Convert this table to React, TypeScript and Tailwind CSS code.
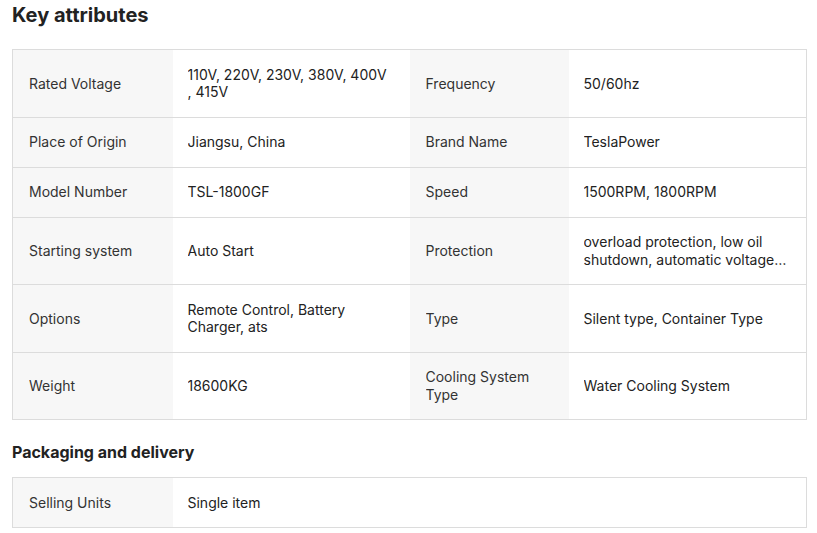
const attrs: [string, string, string, string][] = [
  ["Rated Voltage", "110V, 220V, 230V, 380V, 400V , 415V", "Frequency", "50/60hz"],
  ["Place of Origin", "Jiangsu, China", "Brand Name", "TeslaPower"],
  ["Model Number", "TSL-1800GF", "Speed", "1500RPM, 1800RPM"],
  ["Starting system", "Auto Start", "Protection", "overload protection, low oil shutdown, automatic voltage regulation"],
  ["Options", "Remote Control, Battery Charger, ats", "Type", "Silent type, Container Type"],
  ["Weight", "18600KG", "Cooling System Type", "Water Cooling System"],
];

function Label({ text }: { text: string }) {
  return (
    <td className="border-y border-[#dcdcdc] bg-[#f7f7f7] px-4 py-[15.75px] align-middle text-[#333]">
      <div className="line-clamp-2">{text}</div>
    </td>
  );
}

function Value({ text }: { text: string }) {
  return (
    <td className="border-y border-[#dcdcdc] bg-white py-[15.75px] pl-[15px] pr-4 align-middle text-[#222]">
      <div className="line-clamp-2">{text}</div>
    </td>
  );
}

export default function App() {
  return (
    <div
      className="min-h-[533px] w-[817px] bg-white pl-3 pr-[10px] text-[14px] leading-[17.5px]"
      style={{ fontFamily: "Inter, 'Liberation Sans', sans-serif" }}
    >
      <h2 className="pt-[1px] text-[20px] font-bold leading-[28px] text-[#222]">
        Key attributes
      </h2>

      <table className="mt-5 w-full table-fixed border-collapse border border-[#dcdcdc]">
        <colgroup>
          <col className="w-[160px]" />
          <col className="w-[237px]" />
          <col className="w-[159px]" />
          <col />
        </colgroup>
        <tbody>
          {attrs.map((row, index) => (
            <tr key={index}>
              <Label text={row[0]} />
              <Value text={row[1]} />
              <Label text={row[2]} />
              <Value text={row[3]} />
            </tr>
          ))}
        </tbody>
      </table>

      <h3 className="mt-[21px] text-[16px] font-bold leading-[22px] text-[#222]">
        Packaging and delivery
      </h3>

      <table className="mt-[14px] w-full table-fixed border-collapse border border-[#dcdcdc]">
        <colgroup>
          <col className="w-[160px]" />
          <col />
        </colgroup>
        <tbody>
          <tr>
            <Label text="Selling Units" />
            <Value text="Single item" />
          </tr>
        </tbody>
      </table>
    </div>
  );
}
